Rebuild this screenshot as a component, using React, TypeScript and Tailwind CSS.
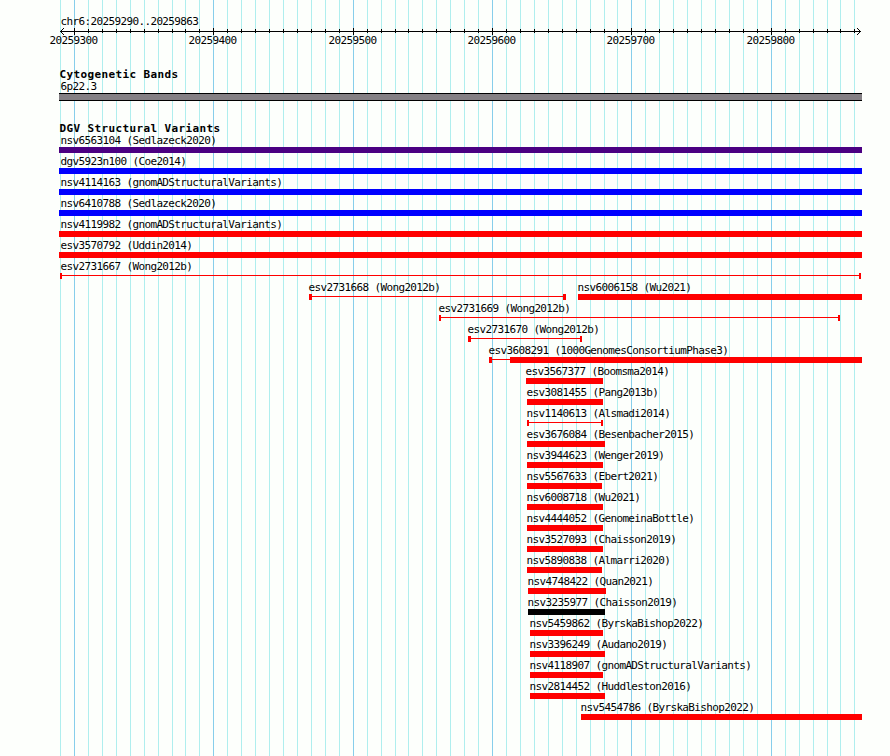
type Shape = "bar" | "span" | "spanBar";

interface Feature {
  label: string;
  start: number;
  end: number;
  color?: string;
  shape?: Shape;
  /** Widths of the end caps of a span, in pixels. */
  caps?: [number, number];
  /** Where the thick part of a spanBar begins. */
  thickFrom?: number;
}

const LEFT = 59;
const RIGHT = 862;
const RED = "bg-[#ff0000]";

const rows: Feature[][] = [
  [{ label: "nsv6563104 (Sedlazeck2020)", start: LEFT, end: RIGHT, color: "bg-[#4b0082]" }],
  [{ label: "dgv5923n100 (Coe2014)", start: LEFT, end: RIGHT, color: "bg-[#0000ff]" }],
  [{ label: "nsv4114163 (gnomADStructuralVariants)", start: LEFT, end: RIGHT, color: "bg-[#0000ff]" }],
  [{ label: "nsv6410788 (Sedlazeck2020)", start: LEFT, end: RIGHT, color: "bg-[#0000ff]" }],
  [{ label: "nsv4119982 (gnomADStructuralVariants)", start: LEFT, end: RIGHT }],
  [{ label: "esv3570792 (Uddin2014)", start: LEFT, end: RIGHT }],
  [{ label: "esv2731667 (Wong2012b)", start: 60, end: 861, shape: "span", caps: [2, 2] }],
  [
    { label: "esv2731668 (Wong2012b)", start: 309, end: 566, shape: "span", caps: [3, 3] },
    { label: "nsv6006158 (Wu2021)", start: 578, end: RIGHT },
  ],
  [{ label: "esv2731669 (Wong2012b)", start: 439, end: 840, shape: "span", caps: [2, 2] }],
  [{ label: "esv2731670 (Wong2012b)", start: 468, end: 582, shape: "span", caps: [3, 2] }],
  [{ label: "esv3608291 (1000GenomesConsortiumPhase3)", start: 489, end: RIGHT, shape: "spanBar", caps: [3, 0], thickFrom: 510 }],
  [{ label: "esv3567377 (Boomsma2014)", start: 526, end: 603 }],
  [{ label: "esv3081455 (Pang2013b)", start: 527, end: 603 }],
  [{ label: "nsv1140613 (Alsmadi2014)", start: 527, end: 603, shape: "span", caps: [2, 2] }],
  [{ label: "esv3676084 (Besenbacher2015)", start: 527, end: 605 }],
  [{ label: "nsv3944623 (Wenger2019)", start: 527, end: 603 }],
  [{ label: "nsv5567633 (Ebert2021)", start: 527, end: 602 }],
  [{ label: "nsv6008718 (Wu2021)", start: 527, end: 603 }],
  [{ label: "nsv4444052 (GenomeinaBottle)", start: 527, end: 603 }],
  [{ label: "nsv3527093 (Chaisson2019)", start: 527, end: 603 }],
  [{ label: "nsv5890838 (Almarri2020)", start: 527, end: 602 }],
  [{ label: "nsv4748422 (Quan2021)", start: 528, end: 606 }],
  [{ label: "nsv3235977 (Chaisson2019)", start: 528, end: 605, color: "bg-black" }],
  [{ label: "nsv5459862 (ByrskaBishop2022)", start: 530, end: 603 }],
  [{ label: "nsv3396249 (Audano2019)", start: 530, end: 605 }],
  [{ label: "nsv4118907 (gnomADStructuralVariants)", start: 530, end: 603 }],
  [{ label: "nsv2814452 (Huddleston2016)", start: 530, end: 605 }],
  [{ label: "nsv5454786 (ByrskaBishop2022)", start: 581, end: RIGHT }],
];

// One tick every 10 bp; every tenth tick is a major one.
const ticks = Array.from({ length: 58 }, (_, i) => {
  const k = i - 1;
  return { x: Math.round(73.98 + 13.936 * k), major: k % 10 === 0, k };
});

const textClass =
  "font-['DejaVu_Sans_Mono','Liberation_Mono',monospace] text-[11px] tracking-[-0.63px] whitespace-pre";

function GridLines() {
  return (
    <svg className="absolute inset-0" width="890" height="756" shapeRendering="crispEdges">
      {ticks.map((t) => (
        <rect key={t.k} x={t.x} y="0" width="1" height="756" fill={t.major ? "#87ceeb" : "#afeeee"} />
      ))}
    </svg>
  );
}

function Ruler() {
  return (
    <div className="h-[68px] pt-[15px]">
      <div className={`${textClass} ml-[60.5px] h-[13px] leading-[13px]`}>chr6:20259290..20259863</div>
      <svg className="block" width="890" height="7" shapeRendering="crispEdges">
        <rect x="60" y="3" width="801" height="1" />
        {ticks.slice(1).map((t) => (
          <rect key={t.k} x={t.x} y={t.major ? 0 : 1} width="1" height={t.major ? 7 : 4} />
        ))}
        {[1, 2, 3].map((d) => (
          <g key={d}>
            <rect x={60 + d} y={3 - d} width="1" height="1" />
            <rect x={60 + d} y={3 + d} width="1" height="1" />
            <rect x={860 - d} y={3 - d} width="1" height="1" />
            <rect x={860 - d} y={3 + d} width="1" height="1" />
          </g>
        ))}
      </svg>
      <div className={`${textClass} flex leading-[11px]`}>
        {ticks
          .filter((t) => t.major)
          .map((t, i, all) => (
            <span
              key={t.k}
              className="w-12 shrink-0"
              style={{ marginLeft: i === 0 ? t.x - 24.5 : t.x - all[i - 1].x - 48 }}
            >
              {20259300 + t.k * 10}
            </span>
          ))}
      </div>
    </div>
  );
}

function Heading({ children }: { children: string }) {
  return (
    <h2 className="ml-[59.5px] h-3 pt-px font-['DejaVu_Sans_Mono','Liberation_Mono',monospace] text-[11px] leading-3 font-bold tracking-[0.38px] whitespace-pre">
      {children}
    </h2>
  );
}

function Glyph({ f }: { f: Feature }) {
  const color = f.color ?? RED;
  if (!f.shape || f.shape === "bar") return <div className={`h-1.5 ${color}`} />;
  const [l, r] = f.caps ?? [2, 2];
  return (
    <div className="flex h-1.5">
      <div className={color} style={{ width: l }} />
      {f.shape === "spanBar" ? (
        <>
          <div className={`mt-0.5 h-px ${color}`} style={{ width: (f.thickFrom ?? f.end) - f.start - l }} />
          <div className={`grow ${color}`} />
        </>
      ) : (
        <>
          <div className={`mt-0.5 h-px grow ${color}`} />
          <div className={color} style={{ width: r }} />
        </>
      )}
    </div>
  );
}

function Row({ features }: { features: Feature[] }) {
  return (
    <div className="flex h-[21px]">
      {features.map((f, i) => (
        <div
          key={f.label}
          className="shrink-0"
          style={{ width: f.end - f.start, marginLeft: i === 0 ? f.start : f.start - features[i - 1].end }}
        >
          <div
            className={`${textClass} h-[13px] leading-[13px]`}
            style={{ marginLeft: Math.max(60.5, f.start - 0.5) - f.start }}
          >
            {f.label}
          </div>
          <Glyph f={f} />
        </div>
      ))}
    </div>
  );
}

export default function App() {
  return (
    <div className="relative h-[756px] w-[890px] overflow-hidden bg-[#fdfffc] text-black">
      <GridLines />
      <div className="relative">
        <Ruler />
        <Heading>Cytogenetic Bands</Heading>
        <div className={`${textClass} ml-[60.5px] h-[13px] leading-[13px]`}>6p22.3</div>
        <div className="ml-[59px] h-2 w-[803px] border-y border-black bg-[#848084]" />
        <div className="h-[21px]" />
        <Heading>DGV Structural Variants</Heading>
        {rows.map((features) => (
          <Row key={features[0].label} features={features} />
        ))}
      </div>
    </div>
  );
}
